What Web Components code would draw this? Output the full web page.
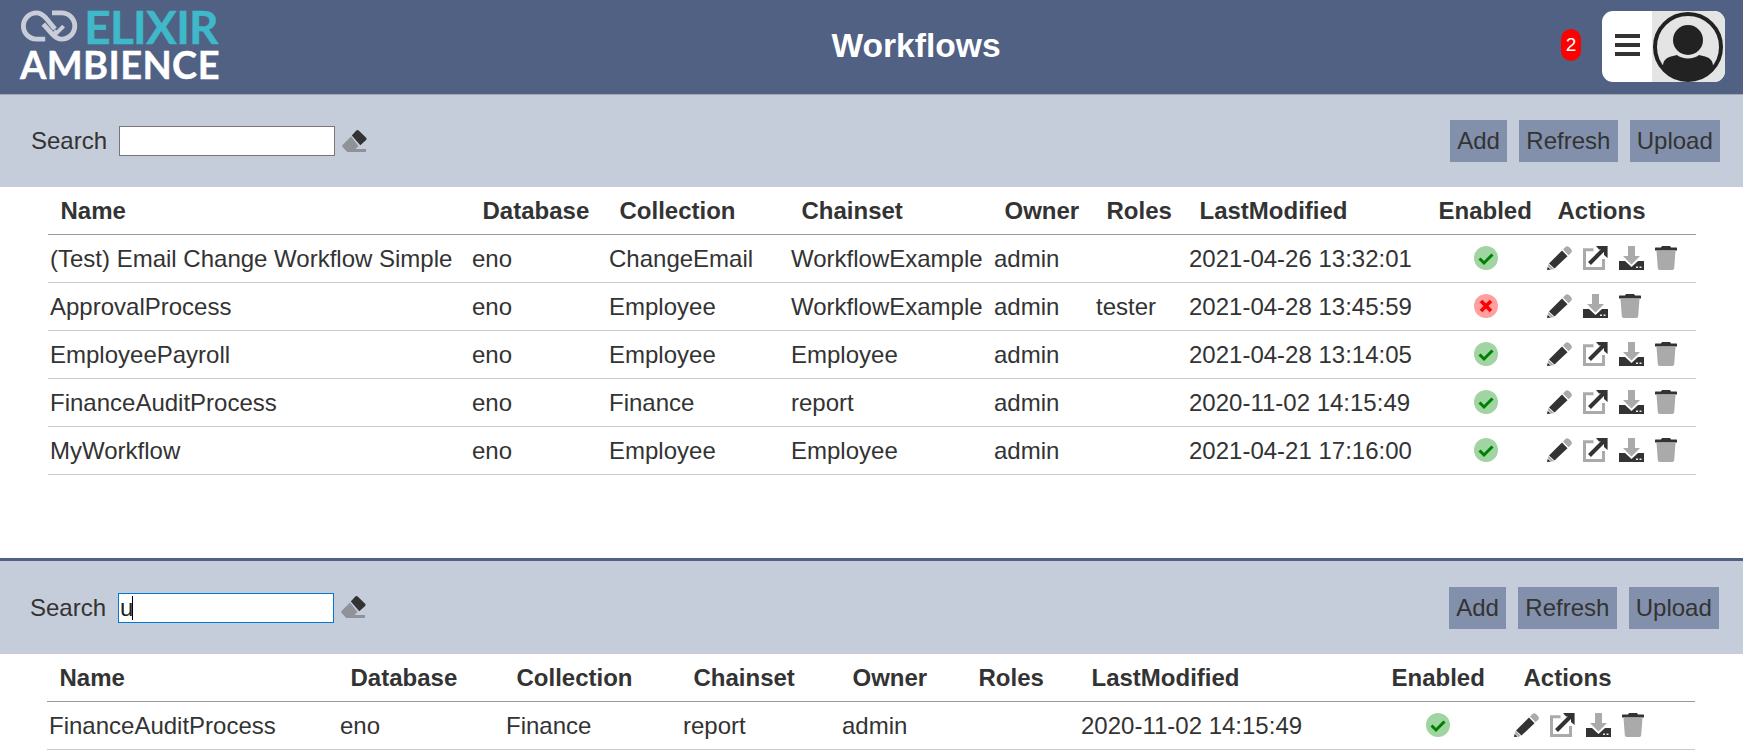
<!DOCTYPE html>
<html>
<head>
<meta charset="utf-8">
<title>Workflows</title>
<style>
  body { margin: 0; background: #fff; font-family: "Liberation Sans", Arial, sans-serif; color: #333; }
</style>
</head>
<body>
<wf-header title="Workflows" count="2"></wf-header>
<wf-panel id="top" widths="422,137,182,203,102,93,239,119,151" inset="0" bar="92"></wf-panel>
<wf-panel id="bottom" widths="291,166,177,159,126,113,300,118,198" inset="1" bar="93" search="u" actions-pad="14"></wf-panel>

<script>
const ICONS = {
  pencil: `<svg width="25" height="24" viewBox="0 0 25 24"><path fill="#aaa" d="M16 3.600l2.200-2.400a3 3 0 0 1 4 0l1.800 1.800a3 3 0 0 1 0 4L21.500 9.200z"/><path fill="#333" d="M15 4.600l5.500 5.600L7.500 22.600 2 17.400z"/><path fill="#aaa" d="M1.600 18l5.200 5-2.200.7-3.800-3.600z"/><path fill="#333" d="M.6 20.800l3.200 3L0 24z"/></svg>`,
  link: `<svg width="25" height="24" viewBox="0 0 25 24"><path fill="none" stroke="#aaa" stroke-width="3" d="M10.500 3.800H1.500v18.700H20.500V13"/><path fill="none" stroke="#333" stroke-width="4" d="M6.500 17.500L21 3"/><path fill="#333" d="M13 0h11.600v12l-3.600-3V3.600h-5z"/></svg>`,
  download: `<svg width="25" height="24" viewBox="0 0 25 24"><path fill="#333" d="M0 24v-9h6l6.500 6 6.500-6h6v9z"/><path fill="#aaa" d="M9 0h7v10h5l-8.500 8.500L4 10h5z"/><path fill="#eee" d="M17 20.500h2v1.500h-2zM20.500 20.500h2v1.500h-2z"/></svg>`,
  trash: `<svg width="22" height="24" viewBox="0 0 22 24"><path fill="#333" d="M7 0h8l1 1.600h5.500a.5.5 0 0 1 .5.5V4.400H0V2.100a.5.5 0 0 1 .5-.5H6z"/><path fill="#aaa" d="M1.500 4.800h19l-1.300 17.200a2 2 0 0 1-2 2H4.800a2 2 0 0 1-2-2z"/></svg>`,
  check: `<svg width="24" height="24" viewBox="0 0 24 24"><circle cx="12" cy="12" r="12" fill="#a0d4a0"/><path fill="none" stroke="#008000" stroke-width="3" d="M5.500 12.500l4.500 4.500 8.500-8.500"/></svg>`,
  cross: `<svg width="24" height="24" viewBox="0 0 24 24"><circle cx="12" cy="12" r="12" fill="#ff9f9f"/><path fill="none" stroke="#f00" stroke-width="3.600" d="M7 7l10 10M17 7L7 17"/></svg>`,
  eraser: `<svg width="25" height="23" viewBox="0 0 25 23"><path fill="#8f9299" d="M9 6.500L.8 14.700a1.800 1.800 0 0 0 0 2.500l4.500 4.800H24v-2.900H13.500l3-3z"/><path fill="#333" d="M9.800 5.600l4.300-4.900a2 2 0 0 1 2.800 0l7 6.700a2 2 0 0 1 0 2.800l-5.600 5z"/></svg>`
};

const WORKFLOWS = [
  ['(Test) Email Change Workflow Simple', 'eno', 'ChangeEmail', 'WorkflowExample', 'admin', '', '2021-04-26 13:32:01', true, true],
  ['ApprovalProcess', 'eno', 'Employee', 'WorkflowExample', 'admin', 'tester', '2021-04-28 13:45:59', false, false],
  ['EmployeePayroll', 'eno', 'Employee', 'Employee', 'admin', '', '2021-04-28 13:14:05', true, true],
  ['FinanceAuditProcess', 'eno', 'Finance', 'report', 'admin', '', '2020-11-02 14:15:49', true, true],
  ['MyWorkflow', 'eno', 'Employee', 'Employee', 'admin', '', '2021-04-21 17:16:00', true, true]
];

class WfHeader extends HTMLElement {
  constructor() {
    super();
    this.shadowDOM = this.attachShadow({mode: 'open'});
  }

  connectedCallback() {
    this.shadowDOM.innerHTML = `
    <style>
      :host {
        display: flex;
        align-items: center;
        height: 94px;
        background: #506184;
        border-bottom: 1px solid #a3a8b2;
        padding: 0 18px 0 20px;
      }
      .logo { display: flex; flex-direction: column; align-self: flex-start; margin-top: 9px; width: 198px; font-family: "Lato", sans-serif; font-weight: 700; }
      .top { display: flex; align-items: center; gap: 5px; height: 36px; }
      .elixir { color: #3fb9c9; font-size: 46px; line-height: 36px; letter-spacing: -.7px; -webkit-text-stroke: .4px #3fb9c9; }
      .ambience { color: #fff; font-size: 38px; line-height: 32px; letter-spacing: .4px; margin-top: 3px; white-space: nowrap; -webkit-text-stroke: .4px #fff; }
      h1 { flex: 1; margin: 0 0 2px; padding-left: 53px; text-align: center; color: #fff; font-size: 33.6px; font-weight: 700; }
      .badge {
        width: 20px; height: 32px; border-radius: 10px; background: #f00; color: #fff;
        font-size: 19px; line-height: 32px; text-align: center; margin: 0 21px 4px 0;
      }
      .menu {
        display: flex; width: 123px; height: 71px; border-radius: 11px; overflow: hidden; background: #fff; margin-bottom: 2px;
      }
      .burger { width: 50px; display: flex; flex-direction: column; justify-content: center; align-items: center; gap: 5px; padding-bottom: 2px; box-sizing: border-box; }
      .burger i { display: block; width: 25px; height: 4px; background: #333; }
      .avatar { flex: 1; background: #e4e4e4; }
      svg { display: block; }
    </style>
    <div class="logo">
      <div class="top">
        <svg width="61" height="36" viewBox="0 0 61 36" fill="none" stroke="#c9cdd8" stroke-width="5">
          <path d="M26 30.500H17A13.500 13.500 0 0 1 17 3.500C22 3.500 24 6 27 9L36 20"/>
          <path d="M33 3.500H43A13.500 13.500 0 0 1 43 30.500C38 30.500 36 28 33 25L24 15"/>
          <path d="M35 22l3 2 7-7" stroke-width="4"/>
        </svg>
        <span class="elixir">ELIXIR</span>
      </div>
      <span class="ambience">AMBIENCE</span>
    </div>
    <h1>${this.getAttribute('title')}</h1>
    <div class="badge">${this.getAttribute('count')}</div>
    <div class="menu">
      <div class="burger"><i></i><i></i><i></i></div>
      <div class="avatar">
        <svg width="73" height="71" viewBox="0 0 73 71">
          <defs><clipPath id="c"><circle cx="36" cy="36" r="33"/></clipPath></defs>
          <g clip-path="url(#c)" fill="#222">
            <circle cx="36" cy="29" r="15"/>
            <path d="M11 72V55c0-6 4-9 10-10l4-1c5 4.500 17 4.500 22 0l4 1c6 1 10 4 10 10v17z"/>
          </g>
          <circle cx="36" cy="36" r="33" fill="none" stroke="#222" stroke-width="4"/>
        </svg>
      </div>
    </div>`;
  }
}

class WfToolbar extends HTMLElement {
  constructor() {
    super();
    this.shadowDOM = this.attachShadow({mode: 'open'});
  }

  connectedCallback() {
    const value = this.getAttribute('value') || '';
    this.shadowDOM.innerHTML = `
    <style>
      :host {
        display: flex;
        align-items: center;
        height: var(--bar, 92px);
        box-sizing: border-box;
        background: #c5ccda;
        padding: 0 calc(23px + var(--inset, 0px)) 0 calc(31px - var(--inset, 0px));
        font-size: 24px;
        color: #333;
      }
      label { margin-right: 12px; }
      .field { position: relative; display: block; }
      input {
        display: block; width: 216px; height: 30px; box-sizing: border-box; margin: 0; padding: 0 1px;
        border: 1px solid #767676; border-radius: 0; background: #fff; color: #222;
        font: 24px "Liberation Sans", Arial, sans-serif; outline: none;
      }
      input.active { border-color: #0078d7; }
      .caret { position: absolute; left: 14px; top: 3px; width: 1px; height: 24px; background: #000; }
      .eraser { margin-left: 7px; }
      .eraser svg { display: block; }
      .spacer { flex: 1; }
      button {
        height: 42px; margin-left: 12px; padding: 0 7.2px; border: 0; background: #8390ab; color: #333;
        font: 24px "Liberation Sans", Arial, sans-serif;
      }
    </style>
    <label>Search</label>
    <span class="field">
      <input class="${value ? 'active' : ''}" value="${value}">
      ${value ? '<span class="caret"></span>' : ''}
    </span>
    <span class="eraser">${ICONS.eraser}</span>
    <span class="spacer"></span>
    <button>Add</button>
    <button>Refresh</button>
    <button>Upload</button>`;
  }
}

class WfTable extends HTMLElement {
  constructor() {
    super();
    this.shadowDOM = this.attachShadow({mode: 'open'});
  }

  set rows(rows) {
    this._rows = rows;
    this.render();
  }

  render() {
    const widths = this.getAttribute('widths').split(',');
    const head = ['Name', 'Database', 'Collection', 'Chainset', 'Owner', 'Roles', 'LastModified', 'Enabled', 'Actions'];
    this.shadowDOM.innerHTML = `
    <style>
      :host { display: block; margin-left: calc(48px - var(--inset, 0px)); width: 1648px; }
      table { border-collapse: collapse; table-layout: fixed; width: 1648px; font-size: 24px; color: #333; }
      th { height: 47px; padding: 0 0 0 12.500px; text-align: left; font-weight: 700; white-space: nowrap; border-bottom: 1px solid #999; }
      th:last-child { padding-left: calc(12.500px + var(--actions-pad, 0px)); }
      td { height: 47px; padding: 0 0 0 2px; white-space: nowrap; border-bottom: 1px solid #ccc; }
      td.state { height: 46px; text-align: center; padding: 0 0 1px; }
      td.state svg { display: block; margin: 0 auto; }
      .actions { display: flex; gap: 11px; align-items: center; padding-left: var(--icons-pad, 0px); margin-bottom: 1px; }
      .actions svg { display: block; }
    </style>
    <table>
      <colgroup>${widths.map(w => `<col style="width:${w}px">`).join('')}</colgroup>
      <tr>${head.map(h => `<th>${h}</th>`).join('')}</tr>
      ${this._rows.map(r => `
      <tr>
        ${r.slice(0, 7).map(c => `<td>${c}</td>`).join('')}
        <td class="state">${r[7] ? ICONS.check : ICONS.cross}</td>
        <td><div class="actions">${ICONS.pencil}${r[8] ? ICONS.link : ''}${ICONS.download}${ICONS.trash}</div></td>
      </tr>`).join('')}
    </table>`;
  }
}

class WfPanel extends HTMLElement {
  constructor() {
    super();
    this.shadowDOM = this.attachShadow({mode: 'open'});
  }

  connectedCallback() {
    const inset = this.getAttribute('inset') || 0;
    const search = this.getAttribute('search') || '';
    const pad = this.getAttribute('actions-pad') || 0;
    this.shadowDOM.innerHTML = `
    <style>
      :host {
        display: block;
        --inset: ${inset}px;
        --bar: ${this.getAttribute('bar')}px;
        --actions-pad: ${pad}px;
        --icons-pad: ${pad ? Number(pad) + 1 : 0}px;
      }
      :host(#top) { height: 463px; border-bottom: 3px solid #506184; }
    </style>
    <wf-toolbar value="${search}"></wf-toolbar>
    <wf-table widths="${this.getAttribute('widths')}"></wf-table>`;
    const shown = search ? WORKFLOWS.filter(w => w[0].startsWith('Finance')) : WORKFLOWS;
    this.shadowDOM.querySelector('wf-table').rows = shown;
  }
}

customElements.define('wf-header', WfHeader);
customElements.define('wf-toolbar', WfToolbar);
customElements.define('wf-table', WfTable);
customElements.define('wf-panel', WfPanel);
</script>
</body>
</html>
